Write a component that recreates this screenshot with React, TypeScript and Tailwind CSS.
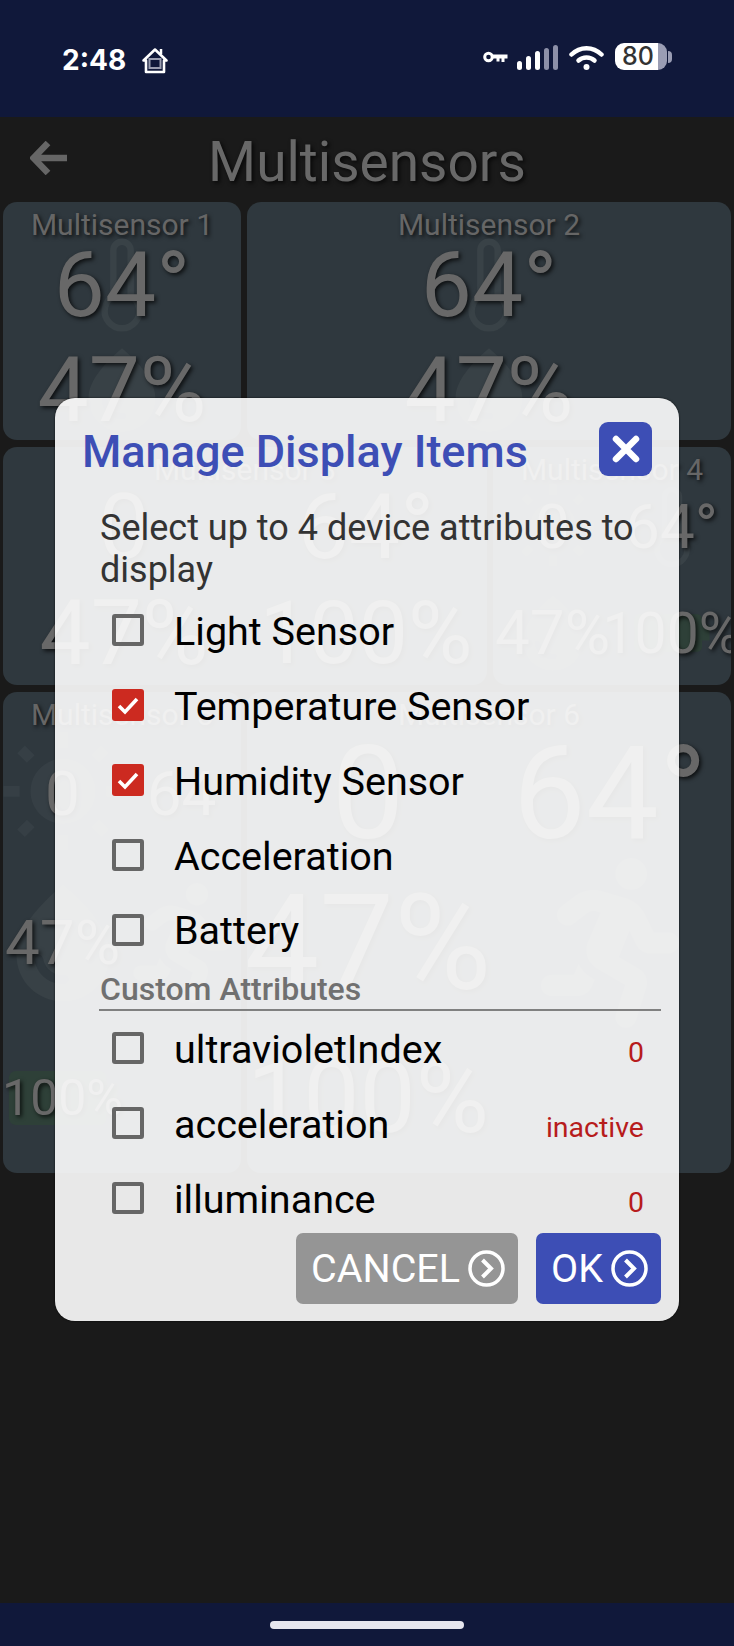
import { FaRunning } from "react-icons/fa";
import { MdBatteryFull, MdWaterDrop, MdWbSunny } from "react-icons/md";
import { Thermometer } from "lucide-react";
import type { ReactNode } from "react";

const ROBOTO = "font-['Roboto',sans-serif]";
const SHADOW = "[text-shadow:2px_2px_4px_rgba(0,0,0,0.75)]";

type Ghost = "temp" | "humidity" | "light" | "battery" | "motion";

function GhostIcon({ kind, size }: { kind: Ghost; size: number }) {
  const base = "absolute left-1/2 top-1/2 -translate-x-1/2 -translate-y-1/2";
  if (kind === "temp") return <Thermometer className={`${base} text-[#394247]`} size={size} strokeWidth={1.5} />;
  if (kind === "humidity") return <MdWaterDrop className={`${base} text-[#384146]`} size={size} />;
  if (kind === "light") return <MdWbSunny className={`${base} text-[#363f45]`} size={size} />;
  if (kind === "battery") return <MdBatteryFull className={`${base} rotate-90 text-[#2e4038]`} size={size} />;
  return <FaRunning className={`${base} text-[#3f474c]`} size={size} />;
}

function Cell({ value, font, ghost, ghostSize = 100 }: { value?: string; font: number; ghost?: Ghost; ghostSize?: number }) {
  return (
    <div className="relative flex min-w-0 items-center justify-center">
      {ghost && <GhostIcon kind={ghost} size={ghostSize} />}
      {value && (
        <span
          className={`relative whitespace-nowrap leading-none text-[#686868] ${SHADOW}`}
          style={{ fontSize: font }}
        >
          {value}
        </span>
      )}
    </div>
  );
}

function Tile({ title, className, children }: { title: string; className: string; children: ReactNode }) {
  return (
    <div className={`flex flex-col overflow-hidden rounded-[14px] bg-[#2f383e] ${className}`}>
      <div className={`pt-[4px] text-center text-[30px] leading-[38px] text-[#666] ${SHADOW}`}>{title}</div>
      {children}
    </div>
  );
}

function Check({ on }: { on?: boolean }) {
  if (on) {
    return (
      <div className="flex h-[32px] w-[32px] shrink-0 items-center justify-center rounded-[3px] bg-[#cc2a20]">
        <svg width="26" height="26" viewBox="0 0 26 26" fill="none">
          <path d="M4 14l6 6L22 7" stroke="#fff" strokeWidth="3.600" />
        </svg>
      </div>
    );
  }
  return <div className="h-[32px] w-[32px] shrink-0 rounded-[3px] border-[4px] border-[#666]" />;
}

function Row({ label, on, value }: { label: string; on?: boolean; value?: string }) {
  return (
    <div className="flex h-[74.8px] shrink-0 items-center pl-[57px] pr-[35px]">
      <Check on={on} />
      <span className="ml-[30px] flex-1 pt-[3px] text-[39.5px] leading-none text-black">{label}</span>
      {value && <span className="pt-[10px] text-[28.5px] leading-none text-[#b71c1c]">{value}</span>}
    </div>
  );
}

function GoIcon() {
  return (
    <svg width="37" height="37" viewBox="0 0 37 37" fill="none" className="shrink-0">
      <circle cx="18.500" cy="18.500" r="16.500" stroke="#fff" strokeWidth="3.500" />
      <path d="M14.500 10l8.500 8.500-8.500 8.500" stroke="#fff" strokeWidth="4" />
    </svg>
  );
}

function StatusBar() {
  return (
    <div className="flex h-[117px] shrink-0 items-start bg-[#10183a] pl-[62px] pr-[62px] pt-[43px] text-white">
      <span className="font-['Inter',sans-serif] text-[28px] font-bold leading-[34px]">2:48</span>
      <svg width="28" height="28" viewBox="0 0 28 28" fill="none" className="ml-[15px] mt-[3px]">
        <path d="M2.500 14.500L14 3.500l11.500 11H23V26H5V14.500z" stroke="#fff" strokeWidth="2.600" strokeLinejoin="round" />
        <path d="M20 3v5" stroke="#fff" strokeWidth="2.500" />
        <rect x="8.500" y="13" width="11" height="9" stroke="#9a9db0" strokeWidth="2" />
      </svg>
      <div className="ml-auto flex items-center">
        <svg width="25" height="12" viewBox="0 0 25 12" fill="none">
          <circle cx="5.500" cy="6" r="3.800" stroke="#fff" strokeWidth="3" />
          <path d="M9 3.500H24.500V7.500h-3v3.500h-3V7.500h-2v3h-3v-3H9z" fill="#fff" />
        </svg>
        <div className="ml-[9px] flex h-[26px] items-end gap-[4px]">
          <div className="h-[9px] w-[5px] rounded-full bg-white" />
          <div className="h-[14px] w-[5px] rounded-full bg-white" />
          <div className="h-[19px] w-[5px] rounded-full bg-white" />
          <div className="h-[22px] w-[5px] rounded-full bg-[#8d90a8]" />
          <div className="h-[25px] w-[5px] rounded-full bg-[#8d90a8]" />
        </div>
        <svg width="35" height="26" viewBox="0 0 35 26" fill="none" className="ml-[11px]">
          <path d="M2.500 10.500C11 2 24 2 32.500 10.500" stroke="#fff" strokeWidth="4.500" strokeLinecap="round" />
          <path d="M9.500 16.500c4.500-4 11.500-4 16 0" stroke="#fff" strokeWidth="4.500" strokeLinecap="round" />
          <circle cx="17.500" cy="23" r="3" fill="#fff" />
        </svg>
        <div className="ml-[11px] flex h-[27px] w-[52px] overflow-hidden rounded-[9px]">
          <div className="flex w-[43px] items-center justify-center bg-white pl-[3px] font-['Inter',sans-serif] text-[25px] font-medium leading-none text-[#333]">
            80
          </div>
          <div className="flex-1 bg-[#9a9db4]" />
        </div>
        <div className="ml-[1px] h-[12px] w-[4px] rounded-r-full bg-[#9a9db4]" />
      </div>
    </div>
  );
}

export default function App() {
  const twoRows = "grid h-[212px] grid-cols-2 grid-rows-[76px_136px]";
  const threeRows = "grid flex-1 grid-cols-2 grid-rows-[120px_178px_132px]";
  return (
    <div className={`relative flex h-[1646px] w-[734px] flex-col overflow-hidden bg-[#1a1a1a] ${ROBOTO}`}>
      <StatusBar />

      <div className="grid h-[85px] shrink-0 grid-cols-[1fr_auto_1fr] items-center">
        <svg width="38" height="34" viewBox="0 0 38 34" fill="none" className="ml-[30px] -mt-[4px]">
          <path d="M18 2L3.500 17 18 32M4 17h33" stroke="#666" strokeWidth="6.500" />
        </svg>
        <span className={`mt-[5px] text-[55px] leading-none text-[#686868] ${SHADOW}`}>Multisensors</span>
      </div>

      <div className="flex flex-col gap-[7px] px-[3px]">
        <div className="flex h-[238px] gap-[6px]">
          <Tile title="Multisensor 1" className="w-[238px]">
            <div className="grid h-[210px] grid-rows-[82px_128px]">
              <Cell value="64°" font={91} ghost="temp" ghostSize={104} />
              <Cell value="47%" font={91} ghost="humidity" ghostSize={100} />
            </div>
          </Tile>
          <Tile title="Multisensor 2" className="flex-1">
            <div className="grid h-[210px] grid-rows-[82px_128px]">
              <Cell value="64°" font={91} ghost="temp" ghostSize={104} />
              <Cell value="47%" font={91} ghost="humidity" ghostSize={100} />
            </div>
          </Tile>
        </div>

        <div className="flex h-[238px] gap-[6px]">
          <Tile title="Multisensor 3" className="w-[484px]">
            <div className={twoRows}>
              <Cell value="0" font={91} />
              <Cell value="64°" font={91} />
              <Cell value="47%" font={91} />
              <Cell value="100%" font={88} />
            </div>
          </Tile>
          <Tile title="Multisensor 4" className="flex-1">
            <div className={twoRows}>
              <Cell value="0" font={62} ghost="light" ghostSize={90} />
              <Cell value="64°" font={62} ghost="temp" ghostSize={90} />
              <Cell value="47%" font={62} ghost="humidity" ghostSize={90} />
              <Cell value="100%" font={57} ghost="battery" ghostSize={90} />
            </div>
          </Tile>
        </div>

        <div className="flex h-[481px] gap-[6px]">
          <Tile title="Multisensor 5" className="w-[238px]">
            <div className={threeRows}>
              <Cell value="0" font={62} ghost="light" ghostSize={130} />
              <Cell value="64" font={62} />
              <Cell value="47%" font={62} ghost="humidity" ghostSize={140} />
              <Cell ghost="motion" ghostSize={120} font={62} />
              <Cell value="100%" font={50} ghost="battery" ghostSize={130} />
            </div>
          </Tile>
          <Tile title="Multisensor 6" className="flex-1">
            <div className={threeRows}>
              <Cell value="0" font={130} />
              <Cell value="64°" font={130} />
              <Cell value="47%" font={133} />
              <Cell ghost="motion" ghostSize={170} font={62} />
              <Cell value="100%" font={100} />
            </div>
          </Tile>
        </div>
      </div>

      <div className="mt-auto flex h-[43px] shrink-0 justify-center bg-[#10183a] pt-[18px]">
        <div className="h-[8px] w-[194px] rounded-full bg-[#e6e6ee]" />
      </div>

      {/* dialog sits over the page, you can see the tiles through it */}
      <div className="absolute left-[55px] top-[398px] flex h-[923px] w-[624px] flex-col rounded-[20px] bg-white/90 pb-[17px] pt-[24px] shadow-[0_0_2px_rgba(0,0,0,0.9)]">
        <div className="flex items-center justify-between pl-[27px] pr-[27px]">
          <span className="pt-[5px] text-[45px] font-medium leading-none text-[#3d4eb5]">Manage Display Items</span>
          <div className="flex h-[54px] w-[53px] items-center justify-center rounded-[9px] bg-[#3d4eb5]">
            <svg width="28" height="28" viewBox="0 0 28 28" fill="none">
              <path d="M4 4l20 20M24 4L4 24" stroke="#fff" strokeWidth="6.500" strokeLinecap="round" />
            </svg>
          </div>
        </div>

        <p className="mt-[31px] pl-[45px] pr-[40px] text-[36px] leading-[42px] text-[#333]">
          Select up to 4 device attributes to display
        </p>

        <div className="mt-[2px] flex h-[629px] flex-col overflow-hidden">
          <Row label="Light Sensor" />
          <Row label="Temperature Sensor" on />
          <Row label="Humidity Sensor" on />
          <Row label="Acceleration" />
          <Row label="Battery" />
          <div className="ml-[44px] mr-[18px] h-[44px] shrink-0 border-b-2 border-[#808080] pl-px pt-[3px] text-[32px] font-medium leading-[39px] text-[#707070]">
            Custom Attributes
          </div>
          <Row label="ultravioletIndex" value="0" />
          <Row label="acceleration" value="inactive" />
          <Row label="illuminance" value="0" />
        </div>

        <div className="mt-auto flex justify-end gap-[18px] pr-[18px]">
          <div className="flex h-[71px] w-[222px] items-center gap-[8px] rounded-[7px] bg-[#959595] pl-[15px] text-[39.5px] leading-none text-white">
            CANCEL
            <GoIcon />
          </div>
          <div className="flex h-[71px] w-[125px] items-center gap-[8px] rounded-[7px] bg-[#3d4eb5] pl-[15px] text-[39.5px] leading-none text-white">
            OK
            <GoIcon />
          </div>
        </div>
      </div>
    </div>
  );
}
